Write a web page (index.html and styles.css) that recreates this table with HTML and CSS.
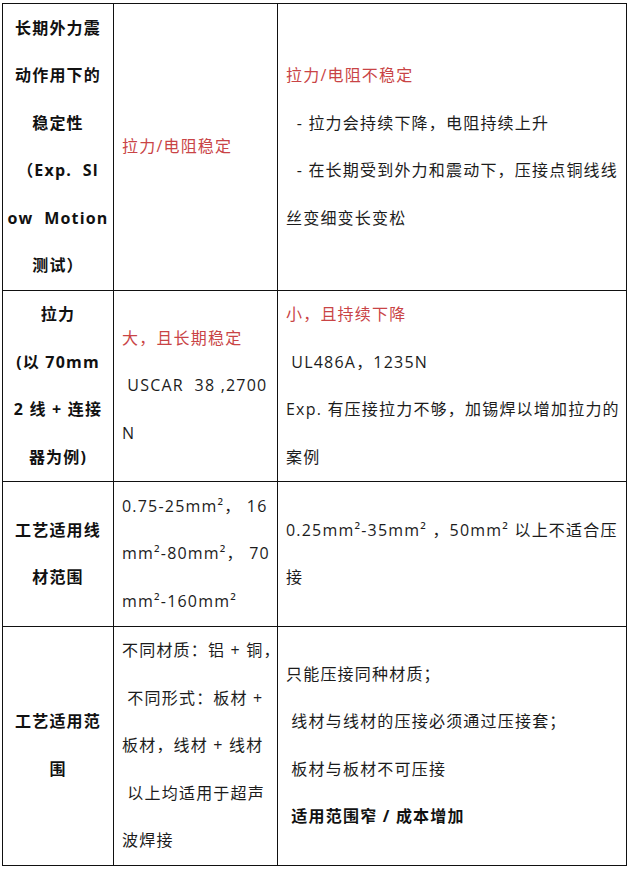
FILE: index.html
```html
<!DOCTYPE html>
<html lang="zh-CN">
<head>
<meta charset="utf-8">
<title>压接与超声波焊接对比</title>
<link rel="stylesheet" href="styles.css">
</head>
<body>
<table class="cmp">
  <colgroup>
    <col class="c1">
    <col class="c2">
    <col class="c3">
  </colgroup>
  <tbody>
    <tr class="r1">
      <td class="head">长期外力震<br>动作用下的<br>稳定性<br>（Exp.&nbsp; Sl<br>ow&nbsp; Motion<br>测试）</td>
      <td><span class="red">拉力/电阻稳定</span></td>
      <td><span class="red">拉力/电阻不稳定</span><br>&nbsp; - 拉力会持续下降，电阻持续上升<br>&nbsp; - 在长期受到外力和震动下，压接点铜线线<br>丝变细变长变松</td>
    </tr>
    <tr class="r2">
      <td class="head">拉力<br>(以 70mm<br>2 线 + 连接<br>器为例)</td>
      <td><span class="red">大，且长期稳定</span><br>&nbsp;USCAR&nbsp; 38 ,2700<br>N</td>
      <td><span class="red">小，且持续下降</span><br>&nbsp;UL486A，1235N<br>Exp. 有压接拉力不够，加锡焊以增加拉力的<br>案例</td>
    </tr>
    <tr class="r3">
      <td class="head">工艺适用线<br>材范围</td>
      <td>0.75-25mm²， 16<br>mm²-80mm²， 70<br>mm²-160mm²</td>
      <td>0.25mm²-35mm² ，50mm² 以上不适合压<br>接</td>
    </tr>
    <tr class="r4">
      <td class="head">工艺适用范<br>围</td>
      <td>不同材质：铝 + 铜，<br>&nbsp;不同形式：板材 +<br>板材，线材 + 线材<br>&nbsp;以上均适用于超声<br>波焊接</td>
      <td>只能压接同种材质；<br>&nbsp;线材与线材的压接必须通过压接套；<br>&nbsp;板材与板材不可压接<br>&nbsp;<strong>适用范围窄 / 成本增加</strong></td>
    </tr>
  </tbody>
</table>
</body>
</html>
```

FILE: styles.css
```css
html, body {
  margin: 0;
  padding: 0;
  background: #ffffff;
}

body {
  font-family: "Open Sans", "Noto Sans CJK SC", sans-serif;
  font-size: 16px;
  color: #1c1c1c;
}

.cmp {
  border-collapse: collapse;
  table-layout: fixed;
  width: 624px;
  margin: 3px 0 0 2px;
}

.c1 { width: 111px; }
.c2 { width: 164px; }
.c3 { width: 349px; }

.cmp td {
  border: 1px solid #111;
  padding: 0 8px;
  line-height: 47.5px;
  letter-spacing: 1.2px;
  vertical-align: middle;
  white-space: nowrap;
  text-align: left;
}

.cmp td.head {
  text-align: center;
  font-weight: 700;
  color: #111;
  padding: 0 4px;
}

.r1 td { height: 286px; }
.r2 td { height: 190px; }
.r3 td { height: 144px; }
.r4 td { height: 237px; }

.red {
  color: #c94446;
}

strong {
  font-weight: 700;
  color: #111;
}
```
